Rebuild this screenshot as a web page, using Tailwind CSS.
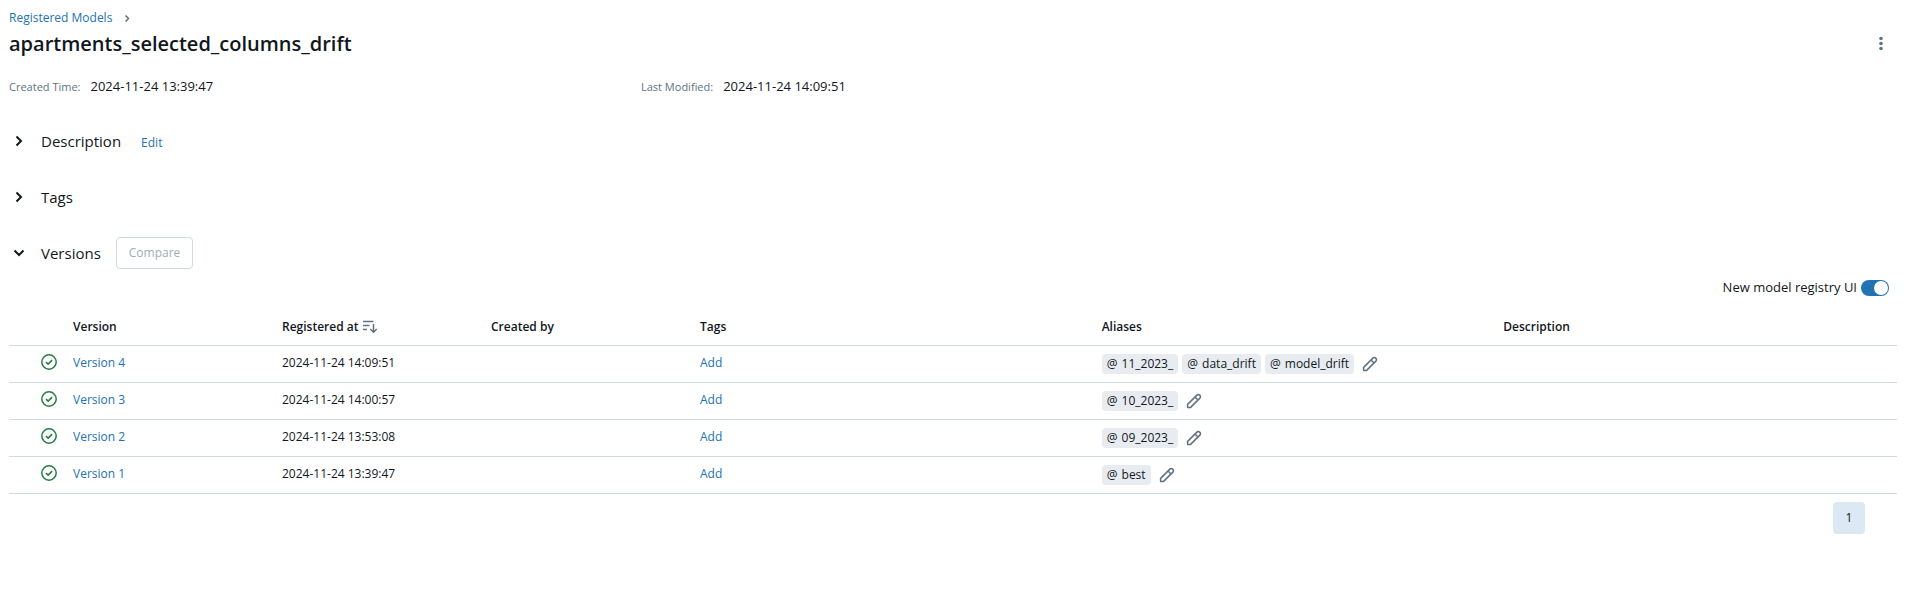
<!DOCTYPE html>
<html lang="en">
<head>
<meta charset="utf-8">
<title>apartments_selected_columns_drift</title>
<script src="https://cdn.jsdelivr.net/npm/@tailwindcss/browser@4"></script>
</head>
<body class="bg-white font-['Open_Sans','Noto_Sans',sans-serif] text-xs text-[#11171c]">
<svg class="hidden" aria-hidden="true">
  <symbol id="check" viewBox="0 0 16 16"><circle cx="8" cy="8" r="7.2" fill="none" stroke="currentColor" stroke-width="1.5"/><path d="M4.9 8.1 7.2 10.1 11.1 6.1" fill="none" stroke="currentColor" stroke-width="1.6"/></symbol>
  <symbol id="pen" viewBox="0 0 16 16"><path d="M1.6 14.400V11.400L10.900 2.100a1.900 1.900 0 0 1 2.700 0l.3.300a1.900 1.900 0 0 1 0 2.700L4.600 14.400ZM9 4l3 3" fill="none" stroke="currentColor" stroke-width="1.5" stroke-linejoin="round"/></symbol>
  <symbol id="chevron" viewBox="0 0 16 16"><path d="M5.500 3.500 10 8l-4.500 4.500" fill="none" stroke="currentColor" stroke-width="2"/></symbol>
</svg>
<main class="pl-[9px] pr-[15px] pt-2 pb-8">
  <header>
    <nav class="flex h-5 items-center gap-2" aria-label="Breadcrumb">
      <a href="#" class="text-[#2272b4]">Registered Models</a>
      <svg class="size-3.5 text-[#5f7281]" viewBox="0 0 14 14" aria-hidden="true"><path d="M5.500 4.500 8.500 7.500l-3 3" fill="none" stroke="currentColor" stroke-width="1.5"/></svg>
    </nav>
    <div class="flex h-8 items-center justify-between">
      <h1 class="text-xl font-semibold">apartments_selected_columns_drift</h1>
      <button type="button" aria-label="More actions" class="flex size-8 items-center justify-center text-[#5f7281]">
        <svg class="size-4" viewBox="0 0 16 16" fill="currentColor" aria-hidden="true"><circle cx="8" cy="2.500" r="1.800"/><circle cx="8" cy="7.500" r="1.800"/><circle cx="8" cy="12.500" r="1.800"/></svg>
      </button>
    </div>
  </header>

  <dl class="mt-[17px] grid grid-cols-3 gap-x-2">
    <div class="flex h-5 items-center gap-2.5"><dt class="text-[11px] text-[#5f7281]">Created Time:</dt><dd class="text-[13px]">2024-11-24 13:39:47</dd></div>
    <div class="flex h-5 items-center gap-2.5"><dt class="text-[11px] text-[#5f7281]">Last Modified:</dt><dd class="text-[13px]">2024-11-24 14:09:51</dd></div>
  </dl>

  <div class="mt-7 flex flex-col gap-6">
    <section class="flex h-8 items-center gap-5">
      <button type="button" aria-expanded="false" class="flex items-center gap-3.5 pl-0.5 text-[15px]"><svg class="size-4" aria-hidden="true"><use href="#chevron"/></svg>Description</button>
      <a href="#" class="pt-1 text-[#2272b4]">Edit</a>
    </section>
    <section class="flex h-8 items-center">
      <button type="button" aria-expanded="false" class="flex items-center gap-3.5 pl-0.5 text-[15px]"><svg class="size-4" aria-hidden="true"><use href="#chevron"/></svg>Tags</button>
    </section>
    <section class="flex h-8 items-center gap-[15px]">
      <button type="button" aria-expanded="true" class="flex items-center gap-3.5 pl-0.5 text-[15px]"><svg class="size-4 rotate-90" aria-hidden="true"><use href="#chevron"/></svg>Versions</button>
      <button type="button" disabled class="h-8 rounded border border-[#d1d9e1] px-3 text-[#a0acb6]">Compare</button>
    </section>
  </div>

  <div class="mt-[7px] flex h-6 items-center justify-end gap-1 pr-2">
    <label for="new-ui" class="text-[13px]">New model registry UI</label>
    <input id="new-ui" type="checkbox" role="switch" checked class="flex h-4 w-7 appearance-none items-center rounded-full bg-[#d1d9e1] p-px before:size-3.5 before:rounded-full before:bg-white checked:justify-end checked:bg-[#2272b4]">
  </div>

  <table class="mt-[9px] w-full table-fixed text-left">
    <colgroup><col class="w-14"><col class="w-[11.07%]"><col class="w-[11.07%]"><col class="w-[11.07%]"><col><col><col></colgroup>
    <thead>
      <tr class="h-9 border-b border-[#d1d9e1]">
        <td></td>
        <th scope="col" class="px-2 font-semibold">Version</th>
        <th scope="col" class="px-2 font-semibold"><button type="button" class="flex items-center gap-1">Registered at<svg class="size-4 text-[#5f7281]" viewBox="0 0 16 16" fill="none" stroke="currentColor" stroke-width="1.5" aria-hidden="true"><path d="M1 2.500h10.500M1 6.500h6.500M1 10.500h4M11.500 5v8M8.300 10l3.200 3.200L14.700 10"/></svg></button></th>
        <th scope="col" class="px-2 font-semibold">Created by</th>
        <th scope="col" class="px-2 font-semibold">Tags</th>
        <th scope="col" class="px-2 font-semibold">Aliases</th>
        <th scope="col" class="px-2 font-semibold">Description</th>
      </tr>
    </thead>
    <tbody>
      <tr class="h-[37px] border-b border-[#d1d9e1] align-top">
        <td class="pt-2 pl-8"><svg class="size-4 text-[#277c43]" role="img" aria-label="Ready"><use href="#check"/></svg></td>
        <td class="px-2 pt-[9px]"><a href="#" class="text-[#2272b4]">Version 4</a></td>
        <td class="px-2 pt-[9px]">2024-11-24 14:09:51</td>
        <td></td>
        <td class="px-2 pt-[9px]"><button type="button" class="text-[#2272b4]">Add</button></td>
        <td class="px-2 pt-2"><div class="flex items-center gap-1"><span class="h-5 rounded bg-[#e8ecf0] px-[5px] leading-5"><span class="mr-px">@</span> 11_2023_</span><span class="h-5 rounded bg-[#e8ecf0] px-[5px] leading-5"><span class="mr-px">@</span> data_drift</span><span class="h-5 rounded bg-[#e8ecf0] px-[5px] leading-5"><span class="mr-px">@</span> model_drift</span><button type="button" aria-label="Edit aliases" class="pl-1 text-[#5f7281]"><svg class="size-4" aria-hidden="true"><use href="#pen"/></svg></button></div></td>
        <td></td>
      </tr>
      <tr class="h-[37px] border-b border-[#d1d9e1] align-top">
        <td class="pt-2 pl-8"><svg class="size-4 text-[#277c43]" role="img" aria-label="Ready"><use href="#check"/></svg></td>
        <td class="px-2 pt-[9px]"><a href="#" class="text-[#2272b4]">Version 3</a></td>
        <td class="px-2 pt-[9px]">2024-11-24 14:00:57</td>
        <td></td>
        <td class="px-2 pt-[9px]"><button type="button" class="text-[#2272b4]">Add</button></td>
        <td class="px-2 pt-2"><div class="flex items-center gap-1"><span class="h-5 rounded bg-[#e8ecf0] px-[5px] leading-5"><span class="mr-px">@</span> 10_2023_</span><button type="button" aria-label="Edit aliases" class="pl-1 text-[#5f7281]"><svg class="size-4" aria-hidden="true"><use href="#pen"/></svg></button></div></td>
        <td></td>
      </tr>
      <tr class="h-[37px] border-b border-[#d1d9e1] align-top">
        <td class="pt-2 pl-8"><svg class="size-4 text-[#277c43]" role="img" aria-label="Ready"><use href="#check"/></svg></td>
        <td class="px-2 pt-[9px]"><a href="#" class="text-[#2272b4]">Version 2</a></td>
        <td class="px-2 pt-[9px]">2024-11-24 13:53:08</td>
        <td></td>
        <td class="px-2 pt-[9px]"><button type="button" class="text-[#2272b4]">Add</button></td>
        <td class="px-2 pt-2"><div class="flex items-center gap-1"><span class="h-5 rounded bg-[#e8ecf0] px-[5px] leading-5"><span class="mr-px">@</span> 09_2023_</span><button type="button" aria-label="Edit aliases" class="pl-1 text-[#5f7281]"><svg class="size-4" aria-hidden="true"><use href="#pen"/></svg></button></div></td>
        <td></td>
      </tr>
      <tr class="h-[37px] border-b border-[#d1d9e1] align-top">
        <td class="pt-2 pl-8"><svg class="size-4 text-[#277c43]" role="img" aria-label="Ready"><use href="#check"/></svg></td>
        <td class="px-2 pt-[9px]"><a href="#" class="text-[#2272b4]">Version 1</a></td>
        <td class="px-2 pt-[9px]">2024-11-24 13:39:47</td>
        <td></td>
        <td class="px-2 pt-[9px]"><button type="button" class="text-[#2272b4]">Add</button></td>
        <td class="px-2 pt-2"><div class="flex items-center gap-1"><span class="h-5 rounded bg-[#e8ecf0] px-[5px] leading-5"><span class="mr-px">@</span> best</span><button type="button" aria-label="Edit aliases" class="pl-1 text-[#5f7281]"><svg class="size-4" aria-hidden="true"><use href="#pen"/></svg></button></div></td>
        <td></td>
      </tr>
    </tbody>
  </table>

  <nav class="mt-2 flex justify-end pr-8" aria-label="Pagination">
    <button type="button" aria-current="page" class="size-8 rounded bg-[#dce8f3]">1</button>
  </nav>
</main>
</body>
</html>
